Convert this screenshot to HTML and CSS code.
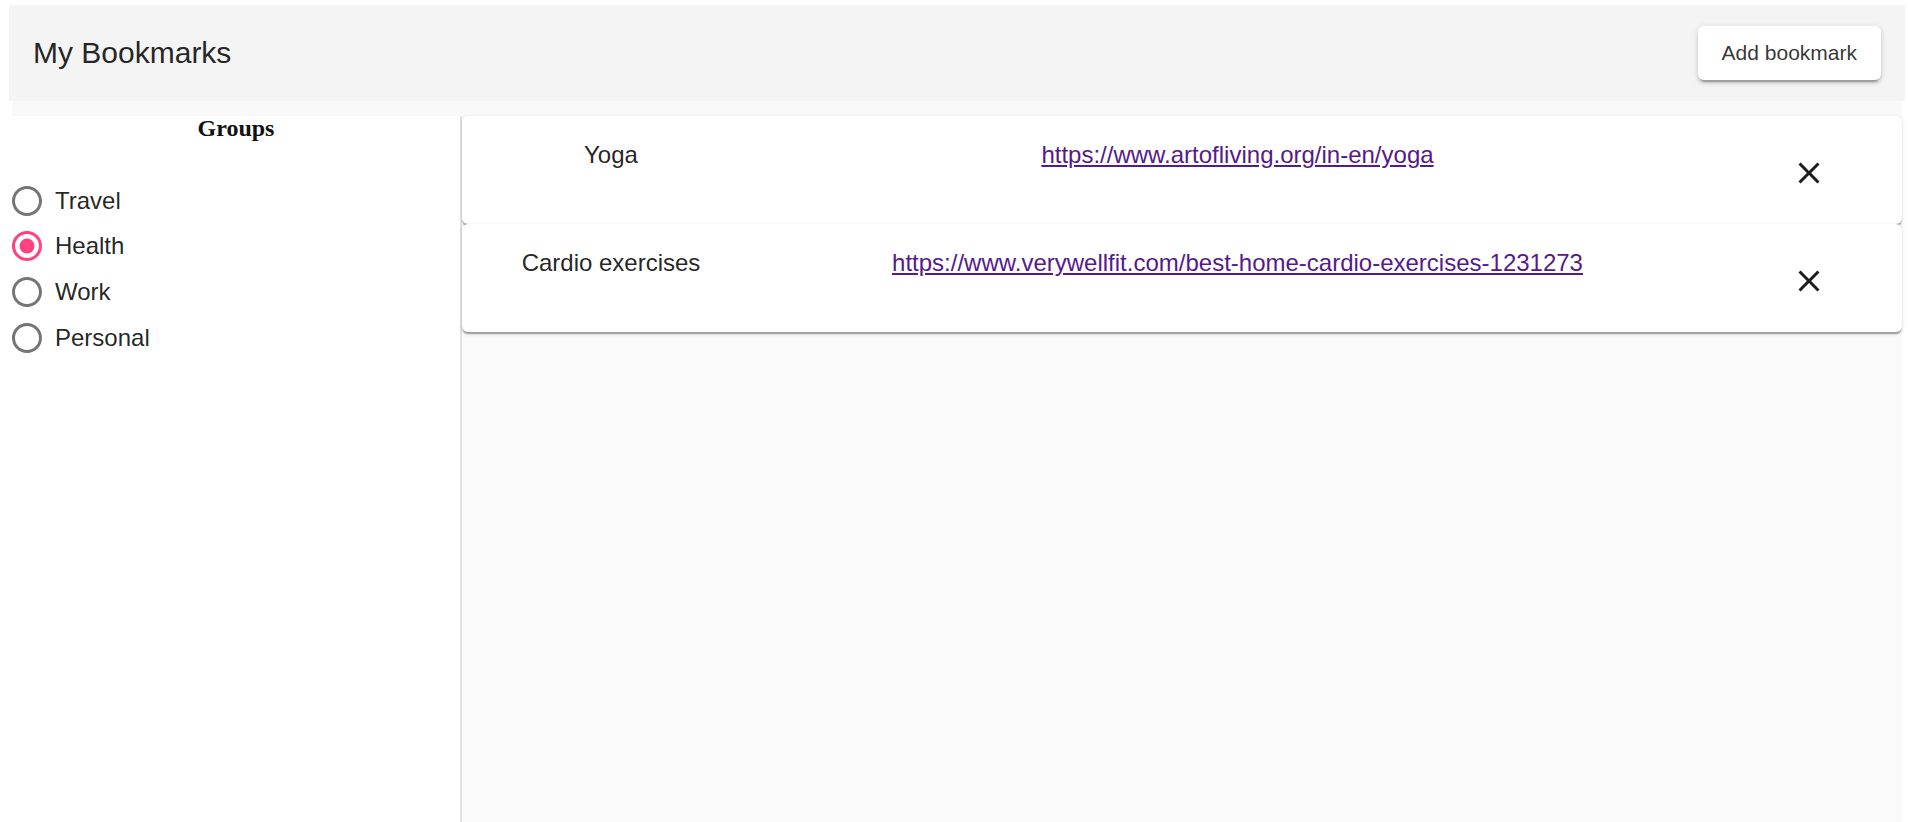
FILE: index.html
```html
<!DOCTYPE html>
<html lang="en">
<head>
<meta charset="utf-8">
<title>My Bookmarks</title>
<link rel="stylesheet" href="styles.css">
</head>
<body>
<header class="appbar">
  <h6 class="title">My Bookmarks</h6>
  <button class="add-btn" type="button">Add bookmark</button>
</header>
<div class="strip"></div>
<div class="layout">
  <aside class="sidebar">
    <h4 class="groups-title">Groups</h4>
    <div class="radio-list">
      <label class="radio-row">
        <svg class="radio-icon" viewBox="0 0 24 24"><path d="M12 2C6.48 2 2 6.48 2 12s4.48 10 10 10 10-4.48 10-10S17.52 2 12 2zm0 18c-4.42 0-8-3.58-8-8s3.58-8 8-8 8 3.58 8 8-3.58 8-8 8z"/></svg>
        <span class="radio-label">Travel</span>
      </label>
      <label class="radio-row checked">
        <svg class="radio-icon" viewBox="0 0 24 24"><path d="M12 2C6.48 2 2 6.48 2 12s4.48 10 10 10 10-4.48 10-10S17.52 2 12 2zm0 18c-4.42 0-8-3.58-8-8s3.58-8 8-8 8 3.58 8 8-3.58 8-8 8z"/><circle cx="12" cy="12" r="5"/></svg>
        <span class="radio-label">Health</span>
      </label>
      <label class="radio-row">
        <svg class="radio-icon" viewBox="0 0 24 24"><path d="M12 2C6.48 2 2 6.48 2 12s4.48 10 10 10 10-4.48 10-10S17.52 2 12 2zm0 18c-4.42 0-8-3.58-8-8s3.58-8 8-8 8 3.58 8 8-3.58 8-8 8z"/></svg>
        <span class="radio-label">Work</span>
      </label>
      <label class="radio-row">
        <svg class="radio-icon" viewBox="0 0 24 24"><path d="M12 2C6.48 2 2 6.48 2 12s4.48 10 10 10 10-4.48 10-10S17.52 2 12 2zm0 18c-4.42 0-8-3.58-8-8s3.58-8 8-8 8 3.58 8 8-3.58 8-8 8z"/></svg>
        <span class="radio-label">Personal</span>
      </label>
    </div>
  </aside>
  <main class="main">
    <div class="card">
      <div class="name">Yoga</div>
      <div class="link-cell"><a class="link" href="#">https://www.artofliving.org/in-en/yoga</a></div>
      <div class="close-cell">
        <button class="close-btn" type="button" aria-label="delete">
          <svg class="close-icon" viewBox="0 0 24 24"><path d="M19 6.41 17.59 5 12 10.59 6.41 5 5 6.41 10.59 12 5 17.59 6.41 19 12 13.41 17.59 19 19 17.59 13.41 12z"/></svg>
        </button>
      </div>
    </div>
    <div class="card">
      <div class="name">Cardio exercises</div>
      <div class="link-cell"><a class="link" href="#">https://www.verywellfit.com/best-home-cardio-exercises-1231273</a></div>
      <div class="close-cell">
        <button class="close-btn" type="button" aria-label="delete">
          <svg class="close-icon" viewBox="0 0 24 24"><path d="M19 6.41 17.59 5 12 10.59 6.41 5 5 6.41 10.59 12 5 17.59 6.41 19 12 13.41 17.59 19 19 17.59 13.41 12z"/></svg>
        </button>
      </div>
    </div>
  </main>
</div>
</body>
</html>
```
FILE: styles.css
```css
* { box-sizing: border-box; }

html, body {
  margin: 0;
  padding: 0;
  background: #ffffff;
  font-family: "Liberation Sans", Arial, sans-serif;
  color: rgba(0, 0, 0, 0.87);
  overflow: hidden;
}

.appbar {
  margin: 5px 3px 0 9px;
  height: 96px;
  background: #f4f4f4;
  display: flex;
  align-items: center;
  justify-content: space-between;
  padding: 0 24px;
}

.title {
  margin: 0;
  font-size: 30px;
  font-weight: 400;
  line-height: 1.6;
  color: rgba(0, 0, 0, 0.87);
}

.add-btn {
  height: 54px;
  padding: 0 24px;
  border: none;
  border-radius: 6px;
  background: #ffffff;
  font-family: "Liberation Sans", Arial, sans-serif;
  font-size: 21px;
  color: rgba(0, 0, 0, 0.8);
  box-shadow: 0 4.5px 1.5px -3px rgba(0,0,0,0.2), 0 3px 3px 0 rgba(0,0,0,0.14), 0 1.5px 7.5px 0 rgba(0,0,0,0.12);
  cursor: pointer;
}

.strip {
  margin: 0 6px 0 12px;
  height: 15px;
  background: #f9f9f9;
}

.layout {
  display: flex;
  margin: 0 6px 0 12px;
  height: 706px;
}

.sidebar {
  width: 450px;
  flex: none;
  background: #ffffff;
  border-right: 2px solid #e2e2e2;
}

.groups-title {
  margin: 0;
  text-align: center;
  font-family: "Liberation Serif", "Times New Roman", serif;
  font-weight: 700;
  font-size: 24px;
  line-height: 24px;
  color: #111;
}

.radio-list {
  margin-top: 38px;
  display: flex;
  flex-direction: column;
}

.radio-row {
  height: 45.6px;
  display: flex;
  align-items: center;
  gap: 10px;
}

.radio-icon {
  width: 36px;
  height: 36px;
  margin-left: -3px;
  fill: #757575;
  flex: none;
}

.radio-row.checked .radio-icon {
  fill: #ff4081;
}

.radio-label {
  font-size: 24px;
  line-height: 36px;
  color: rgba(0, 0, 0, 0.87);
}

.main {
  flex: 1;
  background: #fafafa;
}

.card {
  height: 108px;
  background: #ffffff;
  border-radius: 6px;
  box-shadow: 0 3px 1.5px -1.5px rgba(0,0,0,0.2), 0 1.5px 1.5px 0 rgba(0,0,0,0.14), 0 1.5px 4.5px 0 rgba(0,0,0,0.12);
  display: grid;
  grid-template-columns: 298px 955px 1fr;
  align-items: start;
  padding-top: 21px;
}

.name, .link-cell {
  text-align: center;
  font-size: 24px;
  line-height: 36px;
  white-space: nowrap;
}

.link {
  color: #551a8b;
  text-decoration: underline;
}

.close-cell {
  display: flex;
  justify-content: center;
}

.close-btn {
  padding: 18px;
  border: none;
  background: transparent;
  display: flex;
  cursor: pointer;
}

.close-icon {
  width: 36px;
  height: 36px;
  fill: #1c1c1c;
}
```
